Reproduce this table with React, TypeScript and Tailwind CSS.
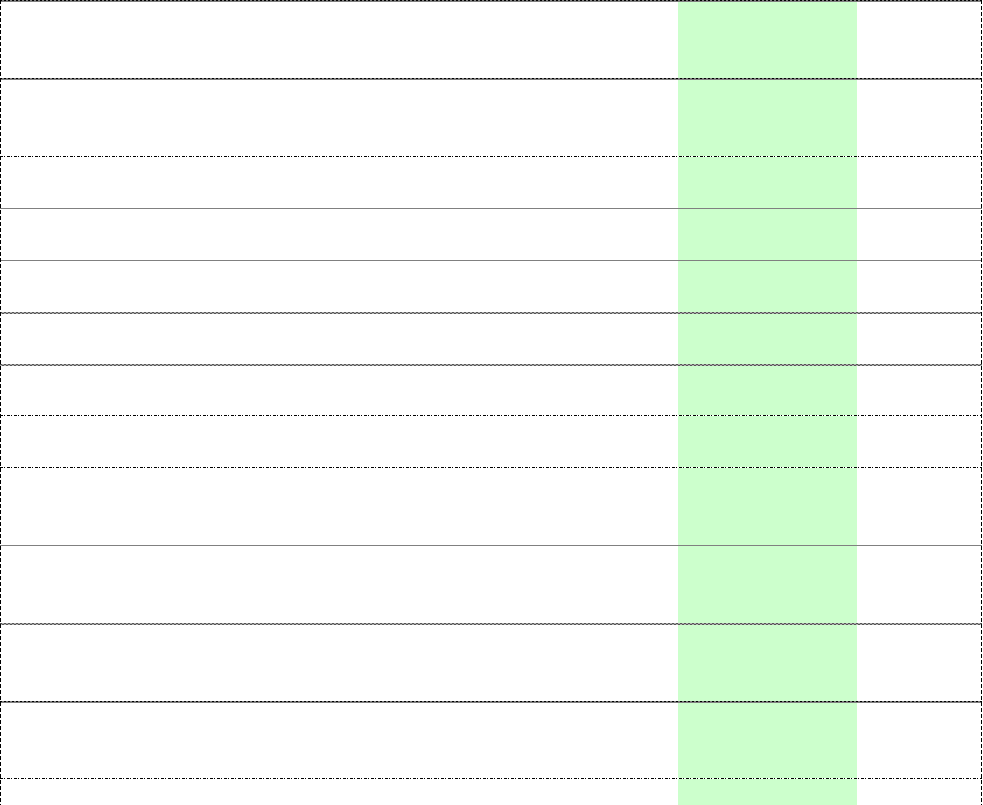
import React from "react";

// separator styles, written out in full so tailwind picks them up
const LINE = {
  dots: "h-[2px] w-full shrink-0 bg-[#808080] bg-[repeating-linear-gradient(90deg,#000_0_2px,#808080_2px_4px)] bg-[length:100%_1px] bg-no-repeat",
  dashdot: "h-px w-full shrink-0 bg-[repeating-linear-gradient(90deg,#000_0_3px,transparent_3px_4px,#000_4px_5px,transparent_5px_7px)]",
  solid: "h-px w-full shrink-0 bg-[#808080]",
  checker: "",
};

type Row = { line: keyof typeof LINE; h: string };

const rows: Row[] = [
  { line: "dots", h: "h-[76px]" },
  { line: "dots", h: "h-[76px]" },
  { line: "dashdot", h: "h-[51px]" },
  { line: "solid", h: "h-[51px]" },
  { line: "solid", h: "h-[51px]" },
  { line: "checker", h: "h-[50px]" },
  { line: "checker", h: "h-[49px]" },
  { line: "dashdot", h: "h-[51px]" },
  { line: "dashdot", h: "h-[77px]" },
  { line: "solid", h: "h-[77px]" },
  { line: "checker", h: "h-[76px]" },
  { line: "dots", h: "h-[75px]" },
  { line: "dashdot", h: "h-[40px]" },
];

const Line = ({ kind }: { kind: keyof typeof LINE }) => {
  if (kind === "checker") {
    // two offset 1px rows, looks like a wavy line from afar
    return (
      <div className="w-full shrink-0 flex flex-col">
        <div className="h-px bg-[repeating-linear-gradient(90deg,#555_0_2px,#b0b0b0_2px_4px)]" />
        <div className="h-px bg-[repeating-linear-gradient(90deg,#b0b0b0_0_2px,#555_2px_4px)]" />
      </div>
    );
  }
  return <div className={LINE[kind]} />;
};

const App = () => {
  return (
    <div className="w-[983px] h-[805px] overflow-hidden bg-white">
      <div className="relative w-[982px] flex flex-col">
        {rows.map((r, i) => (
          <React.Fragment key={i}>
            <Line kind={r.line} />
            <div className={"flex shrink-0 " + r.h}>
              <div className="w-[677px] ml-px" />
              <div className="w-[179px] bg-[#ccffcc]" />
              <div className="flex-1" />
            </div>
          </React.Fragment>
        ))}
        {/* outer dashed edges */}
        <div className="absolute left-0 top-0 h-[805px] w-px bg-[repeating-linear-gradient(180deg,#000_0_4px,transparent_4px_6px)]" />
        <div className="absolute right-0 top-0 h-[805px] w-px bg-[repeating-linear-gradient(180deg,#000_0_4px,transparent_4px_6px)]" />
      </div>
    </div>
  );
};

export default App;
